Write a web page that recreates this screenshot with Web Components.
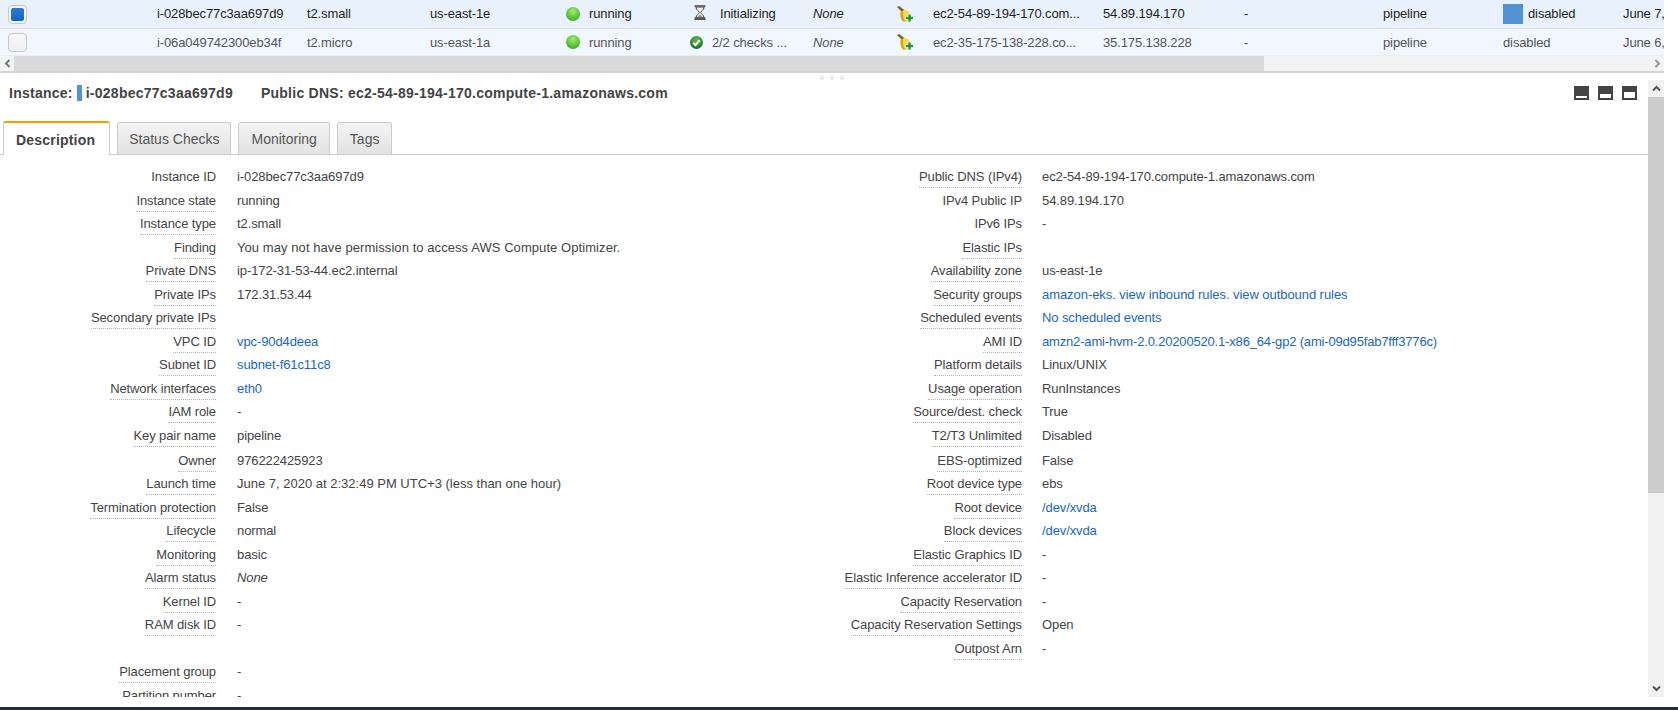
<!DOCTYPE html>
<html>
<head>
<meta charset="utf-8">
<title>Instances</title>
<style>
  html, body { margin: 0; padding: 0; height: 100%; background: #fff; overflow: hidden; }
  body { font: 13px "Liberation Sans", Arial, sans-serif; color: #444; }
</style>
</head>
<body>
<ec2-console>
  <instance-grid slot="grid">
    <instance-row selected>
      <grid-cell><row-check checked></row-check></grid-cell>
      <grid-cell>i-028bec77c3aa697d9</grid-cell>
      <grid-cell>t2.small</grid-cell>
      <grid-cell>us-east-1e</grid-cell>
      <grid-cell><state-ball></state-ball>running</grid-cell>
      <grid-cell><hour-glass></hour-glass>Initializing</grid-cell>
      <grid-cell><i>None</i></grid-cell>
      <grid-cell><key-icon></key-icon></grid-cell>
      <grid-cell>ec2-54-89-194-170.com...</grid-cell>
      <grid-cell>54.89.194.170</grid-cell>
      <grid-cell>-</grid-cell>
      <grid-cell>pipeline</grid-cell>
      <grid-cell><blue-mark></blue-mark>disabled</grid-cell>
      <grid-cell>June 7,</grid-cell>
    </instance-row>
    <instance-row>
      <grid-cell><row-check></row-check></grid-cell>
      <grid-cell>i-06a049742300eb34f</grid-cell>
      <grid-cell>t2.micro</grid-cell>
      <grid-cell>us-east-1a</grid-cell>
      <grid-cell><state-ball></state-ball>running</grid-cell>
      <grid-cell><check-badge></check-badge>2/2 checks ...</grid-cell>
      <grid-cell><i>None</i></grid-cell>
      <grid-cell><key-icon></key-icon></grid-cell>
      <grid-cell>ec2-35-175-138-228.co...</grid-cell>
      <grid-cell>35.175.138.228</grid-cell>
      <grid-cell>-</grid-cell>
      <grid-cell>pipeline</grid-cell>
      <grid-cell>disabled</grid-cell>
      <grid-cell>June 6,</grid-cell>
    </instance-row>
    <h-scroll></h-scroll>
  </instance-grid>

  <detail-panel slot="details">
    <detail-head slot="head"></detail-head>
    <tab-bar slot="tabs"></tab-bar>
    <kv-column slot="left">
      <kv-row label="Instance ID" plain>i-028bec77c3aa697d9</kv-row>
      <kv-row label="Instance state">running</kv-row>
      <kv-row label="Instance type">t2.small</kv-row>
      <kv-row label="Finding" style="letter-spacing: 0.07px">You may not have permission to access AWS Compute Optimizer.</kv-row>
      <kv-row label="Private DNS">ip-172-31-53-44.ec2.internal</kv-row>
      <kv-row label="Private IPs">172.31.53.44</kv-row>
      <kv-row label="Secondary private IPs"></kv-row>
      <kv-row label="VPC ID" link>vpc-90d4deea</kv-row>
      <kv-row label="Subnet ID" link>subnet-f61c11c8</kv-row>
      <kv-row label="Network interfaces" link>eth0</kv-row>
      <kv-row label="IAM role">-</kv-row>
      <kv-row label="Key pair name" tall>pipeline</kv-row>
      <kv-row label="Owner">976222425923</kv-row>
      <kv-row label="Launch time" style="letter-spacing: 0">June 7, 2020 at 2:32:49 PM UTC+3 (less than one hour)</kv-row>
      <kv-row label="Termination protection">False</kv-row>
      <kv-row label="Lifecycle">normal</kv-row>
      <kv-row label="Monitoring">basic</kv-row>
      <kv-row label="Alarm status"><i>None</i></kv-row>
      <kv-row label="Kernel ID">-</kv-row>
      <kv-row label="RAM disk ID">-</kv-row>
      <kv-row></kv-row>
      <kv-row label="Placement group">-</kv-row>
      <kv-row label="Partition number">-</kv-row>
    </kv-column>
    <kv-column slot="right" wide>
      <kv-row label="Public DNS (IPv4)">ec2-54-89-194-170.compute-1.amazonaws.com</kv-row>
      <kv-row label="IPv4 Public IP" plain>54.89.194.170</kv-row>
      <kv-row label="IPv6 IPs" plain>-</kv-row>
      <kv-row label="Elastic IPs"></kv-row>
      <kv-row label="Availability zone">us-east-1e</kv-row>
      <kv-row label="Security groups" link style="letter-spacing: -0.06px">amazon-eks. view inbound rules. view outbound rules</kv-row>
      <kv-row label="Scheduled events" link>No scheduled events</kv-row>
      <kv-row label="AMI ID" link style="letter-spacing: -0.17px">amzn2-ami-hvm-2.0.20200520.1-x86_64-gp2 (ami-09d95fab7fff3776c)</kv-row>
      <kv-row label="Platform details">Linux/UNIX</kv-row>
      <kv-row label="Usage operation">RunInstances</kv-row>
      <kv-row label="Source/dest. check">True</kv-row>
      <kv-row label="T2/T3 Unlimited" tall>Disabled</kv-row>
      <kv-row label="EBS-optimized">False</kv-row>
      <kv-row label="Root device type">ebs</kv-row>
      <kv-row label="Root device" link>/dev/xvda</kv-row>
      <kv-row label="Block devices" link>/dev/xvda</kv-row>
      <kv-row label="Elastic Graphics ID">-</kv-row>
      <kv-row label="Elastic Inference accelerator ID">-</kv-row>
      <kv-row label="Capacity Reservation">-</kv-row>
      <kv-row label="Capacity Reservation Settings">Open</kv-row>
      <kv-row label="Outpost Arn">-</kv-row>
    </kv-column>
  </detail-panel>
</ec2-console>

<script>
// small helper, every element just renders a string into its open shadow root
class Base extends HTMLElement {
  constructor() {
    super();
    this.shadowDOM = this.attachShadow({ mode: 'open' });
  }
  connectedCallback() {
    this.render();
  }
}

class Ec2Console extends Base {
  render() {
    this.shadowDOM.innerHTML = `
      <style>
        :host { display: flex; flex-direction: column; height: 710px; width: 1678px; background: #fff; }
        .main { flex: 1; width: 1664px; min-height: 0; display: flex; flex-direction: column; }
        .foot { height: 3px; background: #232f3e; }
      </style>
      <div class="main">
        <slot name="grid"></slot>
        <slot name="details"></slot>
      </div>
      <div class="foot"></div>`;
  }
}

class InstanceGrid extends Base {
  render() {
    this.shadowDOM.innerHTML = `
      <style>
        :host { display: block; flex: none; border-bottom: 2px solid #d4d4d4; }
      </style>
      <slot></slot>`;
  }
}

class InstanceRow extends Base {
  render() {
    const selected = this.hasAttribute('selected');
    this.shadowDOM.innerHTML = `
      <style>
        :host { display: block; }
        .row {
          display: grid;
          grid-template-columns: 157px 150px 123px 136px 124px 123px 84px 36px 170px 141px 139px 120px 120px 41px;
          height: ${selected ? 28 : 26}px;
          line-height: ${selected ? 28 : 27}px;
          background: ${selected ? '#e9f1fc' : '#f0f7ff'};
          color: ${selected ? '#1f1f1f' : '#555'};
          border-bottom: 1px solid ${selected ? '#dcdfe3' : '#e6edf5'};
          letter-spacing: -0.12px;
          overflow: hidden;
        }
      </style>
      <div class="row"><slot></slot></div>`;
  }
}

class GridCell extends Base {
  render() {
    this.shadowDOM.innerHTML = `
      <style>
        :host { display: flex; align-items: center; white-space: nowrap; overflow: hidden; min-width: 0; }
      </style>
      <slot></slot>`;
  }
}

class RowCheck extends Base {
  render() {
    const inner = this.hasAttribute('checked')
      ? '<div class="fill"></div>' : '';
    this.shadowDOM.innerHTML = `
      <style>
        :host {
          display: block; width: 19px; height: 19px; margin-left: 8px; box-sizing: border-box;
          border: 1px solid #c6c9cc; border-radius: 4px;
          background: linear-gradient(#fafafa, #eeeeee);
          box-shadow: inset 0 0 0 1px #f4f4f4;
        }
        .fill {
          width: 13px; height: 13px; margin: 2px; border-radius: 2px;
          background: linear-gradient(#2b7bd6, #1565c0);
        }
      </style>${inner}`;
  }
}

class StateBall extends Base {
  render() {
    this.shadowDOM.innerHTML = `
      <style>
        :host {
          display: block; width: 14px; height: 14px; border-radius: 50%; margin-right: 9px; flex: none;
          background: radial-gradient(circle at 50% 30%, #a8ea70 0%, #5fc83a 50%, #2f9a1e 100%);
        }
      </style>`;
  }
}

class HourGlass extends Base {
  render() {
    this.shadowDOM.innerHTML = `
      <style>
        :host { display: block; width: 12px; height: 15px; margin: 0 14px 4px 4px; flex: none; }
        svg { display: block; }
      </style>
      <svg width="12" height="15" viewBox="0 0 12 15">
        <path d="M2 2c0 3.500 3 3.800 3.400 5.500C5 9.200 2 9.500 2 13h8c0-3.500-3-3.800-3.400-5.500C7 5.800 10 5.500 10 2z" fill="#f4f4f4" stroke="#4a4a4a"/>
        <path d="M3.500 12.500C4 11 5.400 10.500 6 9.600c.6.900 2 1.400 2.500 2.900z" fill="#8c8c8c"/>
        <rect x="0.500" y="0" width="11" height="2.200" rx="0.600" fill="#6e6e6e"/>
        <rect x="0.500" y="12.300" width="11" height="2.700" rx="0.600" fill="#555"/>
      </svg>`;
  }
}

class CheckBadge extends Base {
  render() {
    this.shadowDOM.innerHTML = `
      <style>
        :host { display: block; width: 13px; height: 13px; margin-right: 9px; flex: none; }
        svg { display: block; }
      </style>
      <svg width="13" height="13" viewBox="0 0 13 13">
        <defs><radialGradient id="g" cx="50%" cy="30%" r="70%"><stop offset="0" stop-color="#5dbb4a"/><stop offset="1" stop-color="#1c6f27"/></radialGradient></defs>
        <circle cx="6.500" cy="6.500" r="6.500" fill="url(#g)"/>
        <path d="M3.200 6.700l2.300 2.300 4.300-4.700" fill="none" stroke="#fff" stroke-width="2"/>
      </svg>`;
  }
}

class KeyIcon extends Base {
  render() {
    this.shadowDOM.innerHTML = `
      <style>
        :host { display: block; width: 17px; height: 16px; flex: none; }
        svg { display: block; }
      </style>
      <svg width="17" height="16" viewBox="0 0 17 16">
        <path d="M0 1L2 0l6 4.500L6 7z" fill="#80601c"/>
        <path d="M3.500 6.500L7.500 3.500c2.500.8 4.500 2.500 5.500 5v3l-2 4H6C4 13.500 3 10 3.500 6.500z" fill="#f6da45"/>
        <path d="M3.500 6.500C3 10 4 13.500 6 15.500h2.500C6.500 13.500 5.500 9.500 6 4.800z" fill="#d2a42a"/>
        <path d="M11 8h3v2.500h2.500v3H14V16h-3v-2.500H8.500v-3H11z" fill="#1f9a2e" stroke="#fff" stroke-width=".7"/>
      </svg>`;
  }
}

class BlueMark extends Base {
  render() {
    this.shadowDOM.innerHTML = `
      <style>
        :host { display: block; width: 20px; height: 20px; margin-right: 5px; background: #5294d2; flex: none; }
      </style>`;
  }
}

class HScroll extends Base {
  render() {
    this.shadowDOM.innerHTML = `
      <style>
        :host { display: flex; height: 15px; background: #f3f3f3; }
        .btn { width: 14px; display: flex; align-items: center; justify-content: center; flex: none; }
        .thumb { width: 1250px; background: #dadada; flex: none; }
        .gap { flex: 1; }
      </style>
      <div class="btn"><svg width="7" height="9" viewBox="0 0 7 9"><path d="M5.500 1L2 4.500 5.500 8" fill="none" stroke="#777" stroke-width="2"/></svg></div>
      <div class="thumb"></div>
      <div class="gap"></div>
      <div class="btn"><svg width="7" height="9" viewBox="0 0 7 9"><path d="M1.500 1L5 4.500 1.500 8" fill="none" stroke="#999" stroke-width="2"/></svg></div>`;
  }
}

class DetailPanel extends Base {
  render() {
    this.shadowDOM.innerHTML = `
      <style>
        :host { display: flex; flex-direction: column; flex: 1; min-height: 0; }
        .grip { height: 7px; display: flex; justify-content: center; align-items: flex-end; gap: 6px; flex: none; }
        .grip i { width: 4px; height: 4px; box-sizing: border-box; border: 1px solid #dcdcdc; border-radius: 50%; }
        .body { height: 617px; display: flex; flex: none; }
        .content { flex: 1; min-width: 0; overflow: hidden; }
        .cols { display: flex; padding-top: 10px; }
      </style>
      <div class="grip"><i></i><i></i><i></i></div>
      <div class="body">
        <div class="content">
          <slot name="head"></slot>
          <slot name="tabs"></slot>
          <div class="cols">
            <slot name="left"></slot>
            <slot name="right"></slot>
          </div>
        </div>
        <v-scroll></v-scroll>
      </div>`;
  }
}

class DetailHead extends Base {
  render() {
    this.shadowDOM.innerHTML = `
      <style>
        :host {
          display: flex; align-items: center; height: 26px; padding: 0 11px 16px 9px;
          font-weight: bold; font-size: 14px; color: #444; letter-spacing: 0.25px;
        }
        .mark { display: inline-block; width: 5px; height: 16px; background: #5294d2; margin: 0 4px 0 4px; vertical-align: -3px; }
        .dns { margin-left: 28px; }
        .tools { margin-left: auto; display: flex; gap: 9px; }
        svg { display: block; }
      </style>
      <span>Instance:<span class="mark"></span>i-028bec77c3aa697d9</span>
      <span class="dns">Public DNS: ec2-54-89-194-170.compute-1.amazonaws.com</span>
      <div class="tools">
        <svg width="15" height="14"><rect width="15" height="14" fill="#444"/><rect x="2" y="10" width="11" height="2" fill="#fff"/></svg>
        <svg width="15" height="14"><rect width="15" height="14" fill="#444"/><rect x="2" y="8" width="11" height="4" fill="#fff"/></svg>
        <svg width="15" height="14"><rect width="15" height="14" fill="#444"/><rect x="2" y="6" width="11" height="6" fill="#fff"/></svg>
      </div>`;
  }
}

class TabBar extends Base {
  render() {
    this.shadowDOM.innerHTML = `
      <style>
        :host {
          display: flex; height: 32px; padding-left: 3px; gap: 7px; align-items: flex-end;
          border-bottom: 1px solid #ccc; box-sizing: content-box; font-size: 14px;
        }
        .tab {
          box-sizing: border-box; height: 32px; line-height: 33px; padding: 0 12px;
          border: 1px solid #ccc; border-bottom: 0; border-radius: 3px 3px 0 0;
          background: linear-gradient(#f4f4f4, #e2e2e2); color: #555;
        }
        .active {
          height: 34px; margin-bottom: -1px; line-height: 34px; padding: 0 14px 0 12px;
          background: #fff; border-top: 2px solid #f90; font-weight: bold; color: #444;
          letter-spacing: 0.2px;
        }
        .status { padding: 0 11px; }
      </style>
      <div class="tab active">Description</div>
      <div class="tab status">Status Checks</div>
      <div class="tab">Monitoring</div>
      <div class="tab">Tags</div>`;
  }
}

class KvColumn extends Base {
  render() {
    const wide = this.hasAttribute('wide');
    this.shadowDOM.innerHTML = `
      <style>
        :host { display: block; flex: none; width: ${wide ? 826 : 806}px; --value-gap: ${wide ? 20 : 21}px; }
      </style>
      <slot></slot>`;
  }
}

class KvRow extends Base {
  render() {
    const label = this.getAttribute('label') || '';
    const plain = this.hasAttribute('plain') || !label;
    this.shadowDOM.innerHTML = `
      <style>
        :host {
          display: flex; box-sizing: border-box; height: ${this.hasAttribute('tall') ? 25 : 23.5}px;
          padding-top: 4px; line-height: 15px; letter-spacing: -0.1px; white-space: nowrap;
        }
        .k { width: 216px; flex: none; text-align: right; letter-spacing: -0.1px; }
        .k span { display: inline-block; padding-bottom: 3px; border-bottom: 1px dotted ${plain ? 'transparent' : '#b4b4b4'}; }
        .v { margin-left: var(--value-gap); color: ${this.hasAttribute('link') ? '#1a66c4' : '#444'}; }
      </style>
      <div class="k"><span>${label}</span></div>
      <div class="v"><slot></slot></div>`;
  }
}

class VScroll extends Base {
  render() {
    this.shadowDOM.innerHTML = `
      <style>
        :host { display: flex; flex-direction: column; width: 16px; flex: none; background: #f1f1f1; }
        .btn { height: 17px; display: flex; align-items: center; justify-content: center; flex: none; }
        .thumb { height: 396px; background: #cdcdcd; flex: none; }
        .gap { flex: 1; }
      </style>
      <div class="btn"><svg width="9" height="7" viewBox="0 0 9 7"><path d="M1 5.500L4.500 2 8 5.500" fill="none" stroke="#555" stroke-width="2"/></svg></div>
      <div class="thumb"></div>
      <div class="gap"></div>
      <div class="btn"><svg width="9" height="7" viewBox="0 0 9 7"><path d="M1 1.500L4.500 5 8 1.500" fill="none" stroke="#555" stroke-width="2"/></svg></div>`;
  }
}

customElements.define('ec2-console', Ec2Console);
customElements.define('instance-grid', InstanceGrid);
customElements.define('instance-row', InstanceRow);
customElements.define('grid-cell', GridCell);
customElements.define('row-check', RowCheck);
customElements.define('state-ball', StateBall);
customElements.define('hour-glass', HourGlass);
customElements.define('check-badge', CheckBadge);
customElements.define('key-icon', KeyIcon);
customElements.define('blue-mark', BlueMark);
customElements.define('h-scroll', HScroll);
customElements.define('detail-panel', DetailPanel);
customElements.define('detail-head', DetailHead);
customElements.define('tab-bar', TabBar);
customElements.define('kv-column', KvColumn);
customElements.define('kv-row', KvRow);
customElements.define('v-scroll', VScroll);
</script>
</body>
</html>
